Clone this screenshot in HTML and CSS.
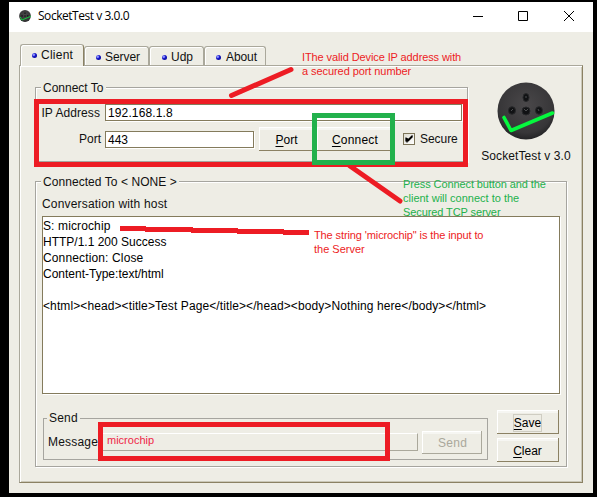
FILE: index.html
```html
<!DOCTYPE html>
<html lang="en">
<head>
<meta charset="utf-8">
<title>SocketTest v 3.0.0</title>
<link rel="stylesheet" href="styles.css">
</head>
<body>
<svg width="0" height="0" class="defs">
  <defs>
    <radialGradient id="disc" cx="50%" cy="40%" r="60%"><stop offset="0" stop-color="#4a484a"/><stop offset=".8" stop-color="#373638"/><stop offset="1" stop-color="#242426"/></radialGradient>
    <symbol id="socket" viewBox="0 0 58 58">
      <circle cx="29" cy="29" r="28.500" fill="url(#disc)"/>
      <g fill="#111214" stroke="#27282a"><ellipse cx="29" cy="15.500" rx="3" ry="4"/><ellipse cx="15" cy="28.500" rx="3.500" ry="3.800"/><circle cx="29" cy="29" r="4"/><ellipse cx="42" cy="28.500" rx="3.500" ry="3.800"/></g>
      <path d="M27 27l2 2 2-2M29 14v2M41 27l1 2M14 29l2-2" fill="none" stroke="#4c4e50"/>
      <path d="M7 35.500L14 48.500L55.500 31" fill="none" stroke="#05f83e" stroke-width="3.600" stroke-linecap="round" stroke-linejoin="round"/>
    </symbol>
  </defs>
</svg>
<div class="window">
  <header class="titlebar">
    <svg class="app-icon"><use href="#socket"/></svg>
    <span class="title">SocketTest v 3.0.0</span>
    <svg class="controls" width="102" height="12" viewBox="0 0 102 12" fill="none" stroke="#000"><path d="M0 6.500h10M45.500 1.500h9v9h-9zM91 1l10 10M101 1L91 11"/></svg>
  </header>
  <nav class="tabs">
    <div class="tab active"><i></i><span>Client</span></div>
    <div class="tab server"><i></i><span>Server</span></div>
    <div class="tab udp"><i></i><span>Udp</span></div>
    <div class="tab about"><i></i><span>About</span></div>
  </nav>
  <main class="pane">
    <div class="top">
      <section class="group connect">
        <h2>Connect To</h2>
        <div class="row ip"><label>IP Address</label><div class="input">192.168.1.8</div></div>
        <div class="row port">
          <label>Port</label><div class="input">443</div>
          <div class="button port-btn"><span><u>P</u>ort</span></div>
          <div class="button connect-btn"><span><u>C</u>onnect</span></div>
          <div class="check"><svg width="10" height="10"><path d="M2 3.500v4M3 4v4.500M4 4.500v3M4 7l4.500-4.500M4 6l4.500-4.500" fill="none" stroke="#000" stroke-width="1.300"/></svg></div>
          <span class="secure">Secure</span>
        </div>
      </section>
      <aside class="brand"><svg class="logo"><use href="#socket"/></svg><span>SocketTest v 3.0</span></aside>
    </div>
    <section class="group conversation">
      <h2>Connected To &lt; NONE &gt;</h2>
      <div class="caption"><span>Conversation with host</span></div>
      <div class="log"><p class="l1">S: microchip</p><p class="l2">HTTP/1.1 200 Success</p><p class="l3">Connection: Close</p><p class="l4">Content-Type:text/html</p><p>&nbsp;</p><p class="l6">&lt;html&gt;&lt;head&gt;&lt;title&gt;Test Page&lt;/title&gt;&lt;/head&gt;&lt;body&gt;Nothing here&lt;/body&gt;&lt;/html&gt;</p></div>
      <div class="bottom">
        <section class="group send">
          <h2>Send</h2>
          <label>Message</label>
          <div class="input disabled"><span>microchip</span></div>
          <div class="button disabled-btn"><span>Send</span></div>
        </section>
        <div class="actions">
          <div class="button"><span class="focus"><u>S</u>ave</span></div>
          <div class="button"><span><u>C</u>lear</span></div>
        </div>
      </div>
    </section>
  </main>
</div>
<div class="note n1"><p>IThe valid Device IP address with</p><p class="b">a secured port number</p></div>
<div class="note n2"><p>Press Connect button and the</p><p class="b">client will connect to the</p><p class="c">Secured TCP server</p></div>
<div class="note n3"><p>The string 'microchip" is the input to</p><p class="b">the Server</p></div>
<svg class="marks" width="597" height="497" fill="none" stroke="#ed1c24" stroke-width="5">
  <path d="M36.500 101.500h429v63h-429z"/>
  <path d="M231.500 95.500L291 69.500M350 166L400 201" stroke-linecap="round"/>
  <path d="M314.500 115.500h78v47h-78z" stroke="#22b14c"/>
  <path d="M120 228.500h26M145 229.500h48M191 230.500h47M237 231.500h47M283 232.500h26"/>
  <path d="M100.500 424.500h287v34h-287z"/>
</svg>
</body>
</html>
```
FILE: styles.css
```css
* { box-sizing: border-box; }
body { margin: 0; width: 597px; height: 497px; padding: 2px 0 0 9px; overflow: hidden; background: #000; color: #111; font: 12px/16px "Liberation Sans", Arial, sans-serif; white-space: nowrap; }
h2, p { margin: 0; font: inherit; }
.defs { position: absolute; }
.window { width: 584px; height: 491px; background: #eeede5; }
.titlebar { height: 30px; background: #fff; display: flex; align-items: center; padding: 0 18px 2px 10px; }
.app-icon { width: 12px; height: 12px; }
.title { margin-left: 7px; font: 12px/16px "Open Sans", sans-serif; letter-spacing: -.46px; color: #000; }
.controls { margin-left: auto; }

.tabs { display: flex; align-items: flex-end; height: 33px; padding-left: 11px; }
.tab { display: flex; align-items: center; height: 19px; border: 1px solid #aaa89b; border-bottom: 0; border-radius: 3px 3px 0 0; box-shadow: inset 1px 1px #fff; padding: 2px 0 0 12px; }
.tab i { width: 5px; height: 5px; border-radius: 50%; background: radial-gradient(circle at 35% 35%, #8d92ff 0 15%, #1616c9 40%, #00007c); margin-right: 4px; flex: none; }
.tab.active { width: 64px; height: 22px; padding: 0 0 1px 11px; border-right-color: #8b8163; position: relative; z-index: 1; background: #eeede5; margin-bottom: -1px; }
.active span { letter-spacing: .25px; }
.server { width: 65px; padding-left: 11px; }
.server span { letter-spacing: -.05px; }
.udp { width: 55px; }
.about { width: 62px; padding-left: 11px; }
.about span { letter-spacing: -.1px; }
.tab.about i { margin-right: 5px; }

.pane { margin-left: 10px; width: 564px; height: 418px; border: 1px solid #aaa89b; border-right-color: #8b8163; border-bottom-color: #8b8163; box-shadow: inset 1px 1px #fff, inset -1px -1px #cbc8b8; padding: 20px 14px 0 15px; }
.top { display: flex; height: 95px; }
.group { border: 1px solid #a6a59f; box-shadow: inset 1px 1px #fff, 1px 1px #fff; }
.group > h2 { width: max-content; background: #eeede5; padding: 0 2px; margin: -8px 0 0 5px; height: 16px; }
.connect { width: 433px; flex: none; height: 75px; margin-top: 1px; }
.row { display: flex; }
.row label { width: 65px; text-align: right; margin-right: 4px; padding-right: 1px; }
.input { height: 17px; border: 1px solid #847b5c; background: #fff; box-shadow: 1px 1px #fff; padding-left: 2px; line-height: 17px; color: #000; }
.ip { margin-top: 8px; }
.ip label { letter-spacing: .08px; line-height: 18px; }
.ip .input { width: 357px; letter-spacing: .12px; }
.port { margin-top: 5px; height: 24px; align-items: center; }
.port .input { width: 149px; }
.port label { padding-right: 0; }
.button { height: 24px; border: 1px solid #8b8163; border-width: 0 1px 1px 0; box-shadow: inset 1px 1px #fff, inset 0 3px #f6f6f2; display: flex; align-items: center; justify-content: center; color: #000; padding-top: 2px; }
u { text-underline-offset: 2px; text-decoration-thickness: 1px; }
.port-btn { width: 56px; margin-left: 5px; }
.connect-btn { width: 76px; margin-left: 2px; letter-spacing: .2px; padding-left: 1px; }
.check { width: 12px; height: 12px; margin-left: 10px; border: 1px solid #7d7559; background: linear-gradient(135deg, #deddd2, #fff); }
.check svg { display: block; }
.secure { margin-left: 5px; letter-spacing: -.05px; }
.brand { width: 100px; flex: none; margin-left: 8px; display: flex; flex-direction: column; align-items: center; }
.logo { width: 58px; height: 58px; margin-top: -4px; }
.brand span { margin-top: 8px; letter-spacing: .1px; }

.conversation { width: 532px; height: 286px; padding: 0 6px; }
.conversation > h2 { margin-left: -1px; letter-spacing: .06px; }
.caption { height: 26px; padding-top: 6px; letter-spacing: .18px; }
.log { width: 518px; height: 178px; border: 1px solid #847b5c; background: #fff; box-shadow: 1px 1px #fff; padding: 1px 0 0; color: #000; }
.log .l1 { letter-spacing: .12px; }
.log .l3 { letter-spacing: .14px; }
.log .l6 { letter-spacing: .1px; }
.bottom { display: flex; }
.send { width: 445px; height: 42px; margin: 24px 0 0 1px; box-shadow: none; display: grid; grid-template-columns: 57px 317px 60px; column-gap: 4px; grid-template-rows: 11px 24px; align-items: center; }
.send > h2 { grid-column: 1 / 4; margin: -14px 0 0 3px; letter-spacing: .2px; }
.send label { padding-left: 4px; letter-spacing: .2px; }
.send .input.disabled { background: transparent; border-color: #fff #aaa89b #aaa89b #fff; margin-left: -4px; width: 317px; box-shadow: none; height: 18px; }
.disabled span { display: block; margin-left: 3px; line-height: 13px; font-size: 11px; color: #ef2647; }
.disabled-btn { width: 60px; height: 23px; color: #aaa89b; border-color: #aaa89b; margin-left: -4px; letter-spacing: .3px; padding-left: 2px; }
.actions { margin: 16px 0 0 9px; display: grid; gap: 4px; align-content: start; }
.actions .button { width: 62px; }
.focus { box-shadow: 0 0 0 1px #cfcdc2; }

.marks { position: absolute; left: 0; top: 0; }
.note { position: absolute; font-size: 11px; line-height: 14px; color: #ed1c24; }
.n1 { left: 302px; top: 50px; letter-spacing: -.1px; }
.n1 .b { letter-spacing: -.07px; }
.n2 { left: 403px; top: 177px; color: #22b14c; letter-spacing: -.1px; }
.n2 .b { letter-spacing: 0; }
.n3 { left: 314px; top: 228px; letter-spacing: -.11px; }
.n3 .b { letter-spacing: 0; }
```
